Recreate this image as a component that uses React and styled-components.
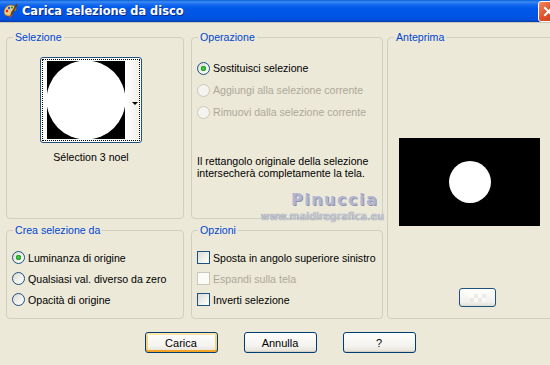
import React from "react";
import styled, { createGlobalStyle } from "styled-components";

const GlobalStyle = createGlobalStyle`
  html, body {
    margin: 0;
    padding: 0;
    background: #ece9d8;
  }
  body {
    font-family: "Liberation Sans", Arial, sans-serif;
    font-size: 11px;
    color: #000;
  }
`;

const Window = styled.div`
  width: 550px;
  height: 365px;
  overflow: hidden;
  background: #ece9d8;
  font-size: 10.6px;
`;

const TitleBar = styled.div`
  height: 23px;
  display: flex;
  align-items: center;
  justify-content: space-between;
  padding-left: 2px;
  box-sizing: border-box;
  background: linear-gradient(
    to bottom,
    #0a5fd8 0px,
    #3d8bf5 2px,
    #1b6ef0 4px,
    #0058e8 8px,
    #0055e5 15px,
    #0052df 19px,
    #0046c8 21px,
    #0a3aa8 22px,
    #c9c6b6 22px
  );
`;

const TitleLeft = styled.div`
  display: flex;
  align-items: center;
  gap: 4px;
  margin-top: -1px;
`;

const TitleText = styled.span`
  color: #fff;
  font-family: "DejaVu Sans", "Liberation Sans", sans-serif;
  font-weight: bold;
  font-size: 11.4px;
  text-shadow: 1px 1px 0 #0a2a8a;
`;

const CloseButton = styled.div`
  width: 21px;
  height: 21px;
  margin-top: -1px;
  margin-right: -9px;
  border: 1px solid #fff;
  border-radius: 3px;
  box-sizing: border-box;
  background: linear-gradient(135deg, #f08a64 0%, #e2552d 45%, #c23a17 100%);
  display: flex;
  align-items: center;
  justify-content: center;
`;

const Body = styled.div`
  display: grid;
  grid-template-columns: 181px 192px 175px;
  grid-template-rows: 188px 95px;
  column-gap: 4px;
  row-gap: 5px;
  padding: 8px 0 0 6px;
`;

const Group = styled.fieldset`
  margin: 0;
  padding: 0 5px;
  width: ${(p) => p.$width || "auto"};
  box-sizing: border-box;
  border: 1px solid #d0d0bf;
  border-radius: 4px;
  min-width: 0;
  position: relative;
  grid-column: ${(p) => p.$col || "auto"};
  grid-row: ${(p) => p.$rows || "auto"};
  display: flex;
  flex-direction: column;
`;

const Legend = styled.legend`
  color: #0046d5;
  padding: 0 2px;
  margin-left: 1px;
  font-size: 10.6px;
  line-height: 13px;
`;

const ThumbColumn = styled.div`
  width: 102px;
  margin: 13px 0 0 28px;
  display: flex;
  flex-direction: column;
  align-items: center;
`;

const Thumb = styled.div`
  width: 102px;
  height: 86px;
  box-sizing: border-box;
  border: 1px solid #1c5180;
  border-radius: 3px;
  background: #fff;
  padding: 1px;
`;

const ThumbInner = styled.div`
  height: 100%;
  box-sizing: border-box;
  border: 1px dotted #000;
  display: flex;
  padding: 1px 0 1px 4px;
`;

const ScrollStrip = styled.div`
  flex: 1;
  display: flex;
  align-items: center;
  justify-content: flex-end;
  background: linear-gradient(to right, #fff, #f0efe8);
`;

const Caption = styled.div`
  margin-top: 8px;
  line-height: 13px;
`;

const OptionList = styled.div`
  margin-top: ${(p) => p.$top || 0}px;
  display: flex;
  flex-direction: column;
`;

const OptionRow = styled.div`
  height: ${(p) => p.$h || 22}px;
  display: flex;
  align-items: center;
  gap: 3px;
  color: ${(p) => (p.$disabled ? "#aca899" : "#000")};
  white-space: nowrap;
`;

const Radio = styled.span`
  width: 13px;
  height: 13px;
  box-sizing: border-box;
  border-radius: 50%;
  flex-shrink: 0;
  border: 1px solid ${(p) => (p.$disabled ? "#cac8bb" : "#1c5180")};
  background: ${(p) =>
    p.$checked
      ? "radial-gradient(circle, #55d04f 0, #21a121 2.5px, transparent 3px), linear-gradient(135deg, #dcdcd5, #fff)"
      : p.$disabled
      ? "#f4f3ee"
      : "linear-gradient(135deg, #dcdcd5, #fff)"};
`;

const Check = styled.span`
  width: 13px;
  height: 13px;
  box-sizing: border-box;
  flex-shrink: 0;
  border: 1px solid ${(p) => (p.$disabled ? "#cac8bb" : "#1c5180")};
  background: ${(p) =>
    p.$disabled ? "#fbfbf8" : "linear-gradient(135deg, #dcdcd5, #fff)"};
`;

const Note = styled.div`
  margin-top: 32px;
  line-height: 12px;
  white-space: nowrap;
`;

const Watermark = styled.div`
  position: absolute;
  left: 69px;
  top: 146px;
  display: flex;
  flex-direction: column;
  align-items: center;
  pointer-events: none;
`;

const WatermarkName = styled.span`
  font-family: "DejaVu Sans", sans-serif;
  font-weight: bold;
  font-size: 16px;
  letter-spacing: 1.5px;
  color: #b4b6cf;
  text-shadow: 1px 1px 0 #8f92ae;
  line-height: 20px;
  margin-left: 24px;
`;

const WatermarkUrl = styled.span`
  font-family: "DejaVu Sans", sans-serif;
  font-size: 10.2px;
  letter-spacing: 0.3px;
  color: #d2d3de;
  text-shadow: 0 0 1px #7e819e, 0 0 1px #7e819e;
  line-height: 13px;
`;

const Preview = styled.div`
  margin: 94px 0 0 6px;
  width: 141px;
  height: 88px;
  background: #000;
  display: flex;
  align-items: center;
  justify-content: center;
`;

const PreviewButton = styled.div`
  margin: 62px 0 0 66px;
  width: 37px;
  height: 19px;
  box-sizing: border-box;
  border: 1px solid #1c5180;
  border-radius: 3px;
  background: linear-gradient(#fff, #f1f0ea 80%, #dedbd0);
  display: flex;
  align-items: center;
  justify-content: center;
`;

const Checker = styled.span`
  width: 16px;
  height: 8px;
  opacity: 0.5;
  background: repeating-conic-gradient(#e0dfd8 0 25%, #fff 0 50%) 0 0 / 8px 8px;
`;

const ButtonRow = styled.div`
  display: flex;
  justify-content: center;
  gap: 26px;
  padding-left: 10px;
  margin-top: 13px;
`;

const Button = styled.div`
  width: 73px;
  height: 21px;
  box-sizing: border-box;
  border: 1px solid #003c74;
  border-radius: 3px;
  background: linear-gradient(#ffffff, #f3f2ed 70%, #e3e0d6);
  display: flex;
  align-items: center;
  justify-content: center;
  font-size: 11px;
  box-shadow: ${(p) =>
    p.$default
      ? "inset 0 2px 0 #ffe7a8, inset 0 -2px 0 #f3a425, inset 2px 0 0 #fbd47a, inset -2px 0 0 #fbd47a"
      : "inset 0 -1px 0 #d6d0c5"};
`;

const AppIcon = () => (
  <svg width="16" height="16" viewBox="0 0 16 16">
    <path
      d="M2 9c0-4 3-7 7-7 3 0 5 2 5 4 0 2-2 2-3 2s-2 1-1 2c1 1 0 3-3 3-3 0-5-1-5-4z"
      fill="#e8c98a"
      stroke="#8a5a20"
      strokeWidth="0.8"
    />
    <circle cx="5" cy="8" r="1.2" fill="#e02020" />
    <circle cx="7" cy="5" r="1.2" fill="#2050e0" />
    <circle cx="10" cy="4.5" r="1.1" fill="#20a020" />
    <circle cx="6" cy="11.5" r="1.1" fill="#f0d020" />
    <path d="M15 1 L9 12" stroke="#6a3a10" strokeWidth="1.6" />
    <path d="M9 12 L8 14.5" stroke="#d04020" strokeWidth="1.8" />
  </svg>
);

const CloseIcon = () => (
  <svg width="11" height="11" viewBox="0 0 11 11">
    <path d="M2 2 L9 9 M9 2 L2 9" stroke="#fff" strokeWidth="2" strokeLinecap="square" />
  </svg>
);

const SelectionImage = () => (
  <svg width="78" height="78" viewBox="0 0 78 78">
    <rect width="78" height="78" fill="#000" />
    <circle cx="39" cy="39" r="39.5" fill="#fff" />
  </svg>
);

const DropArrow = () => (
  <svg width="6" height="4" viewBox="0 0 6 4" style={{ marginRight: 1, marginTop: 8 }}>
    <path d="M0 0 H6 L3 3 Z" fill="#000" />
  </svg>
);

export default function App() {
  return (
    <Window>
      <GlobalStyle />
      <TitleBar>
        <TitleLeft>
          <AppIcon />
          <TitleText>Carica selezione da disco</TitleText>
        </TitleLeft>
        <CloseButton>
          <CloseIcon />
        </CloseButton>
      </TitleBar>

      <Body>
        <Group $width="178px" $col="1" $rows="1">
          <Legend>Selezione</Legend>
          <ThumbColumn>
            <Thumb>
              <ThumbInner>
                <SelectionImage />
                <ScrollStrip>
                  <DropArrow />
                </ScrollStrip>
              </ThumbInner>
            </Thumb>
            <Caption>Sélection 3 noel</Caption>
          </ThumbColumn>
        </Group>

        <Group $col="2" $rows="1">
          <Legend>Operazione</Legend>
          <OptionList $top={13}>
            <OptionRow>
              <Radio $checked />
              Sostituisci selezione
            </OptionRow>
            <OptionRow $disabled>
              <Radio $disabled />
              Aggiungi alla selezione corrente
            </OptionRow>
            <OptionRow $disabled>
              <Radio $disabled />
              Rimuovi dalla selezione corrente
            </OptionRow>
          </OptionList>
          <Note>
            Il rettangolo originale della selezione
            <br />
            intersecherà completamente la tela.
          </Note>
          <Watermark>
            <WatermarkName>Pinuccia</WatermarkName>
            <WatermarkUrl>www.maidiregrafica.eu</WatermarkUrl>
          </Watermark>
        </Group>

        <Group $col="3" $rows="1 / span 2">
          <Legend>Anteprima</Legend>
          <Preview>
            <svg width="44" height="44" viewBox="0 0 44 44">
              <circle cx="22" cy="22" r="21" fill="#fff" />
            </svg>
          </Preview>
          <PreviewButton>
            <Checker />
          </PreviewButton>
        </Group>

        <Group $width="178px" $col="1" $rows="2">
          <Legend>Crea selezione da</Legend>
          <OptionList $top={10}>
            <OptionRow $h={21}>
              <Radio $checked />
              Luminanza di origine
            </OptionRow>
            <OptionRow $h={21}>
              <Radio />
              Qualsiasi val. diverso da zero
            </OptionRow>
            <OptionRow $h={21}>
              <Radio />
              Opacità di origine
            </OptionRow>
          </OptionList>
        </Group>

        <Group $col="2" $rows="2">
          <Legend>Opzioni</Legend>
          <OptionList $top={10}>
            <OptionRow $h={21}>
              <Check />
              Sposta in angolo superiore sinistro
            </OptionRow>
            <OptionRow $h={21} $disabled>
              <Check $disabled />
              Espandi sulla tela
            </OptionRow>
            <OptionRow $h={21}>
              <Check />
              Inverti selezione
            </OptionRow>
          </OptionList>
        </Group>
      </Body>

      <ButtonRow>
        <Button $default>Carica</Button>
        <Button>Annulla</Button>
        <Button>?</Button>
      </ButtonRow>
    </Window>
  );
}
